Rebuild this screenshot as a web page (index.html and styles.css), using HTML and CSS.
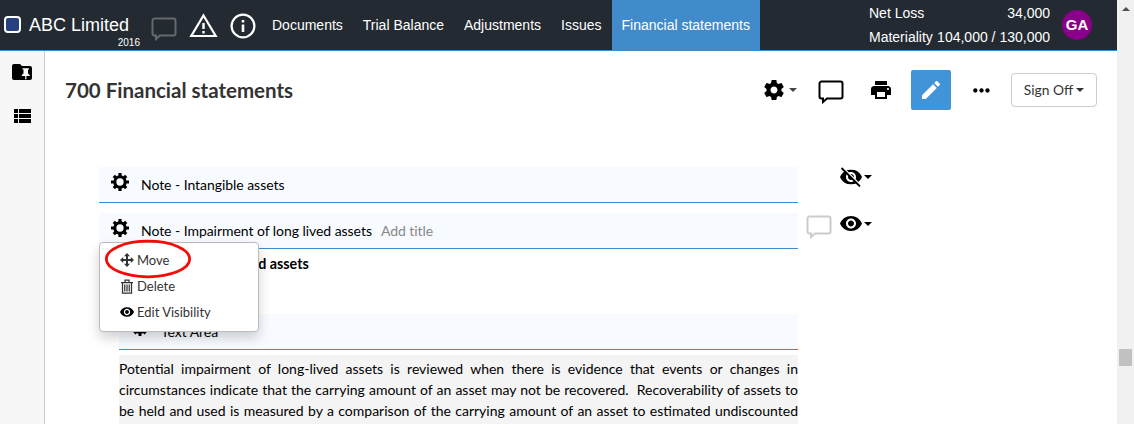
FILE: index.html
```html
<!DOCTYPE html>
<html lang="en">
<head>
<meta charset="utf-8">
<title>700 Financial statements</title>
<link rel="stylesheet" href="styles.css">
</head>
<body>
<svg class="defs" width="0" height="0" aria-hidden="true">
  <symbol id="gear" viewBox="0 0 18 18">
    <circle cx="9" cy="9" r="5.2" fill="none" stroke="#000" stroke-width="3.1"/>
    <g fill="#000">
      <path d="M7.400 0h3.200v4H7.400zM7.400 14h3.200v4H7.400zM0 7.400h4v3.200H0zM14 7.400h4v3.200h-4z"/>
      <path transform="rotate(45 9 9)" d="M7.400.2h3.200v4H7.400zM7.400 13.800h3.200v4H7.400zM.2 7.400h4v3.200h-4zM13.800 7.400h4v3.200h-4z"/>
    </g>
  </symbol>
  <symbol id="eye" viewBox="1 4.5 22 15">
    <path d="M12 4.5C7 4.5 2.73 7.61 1 12c1.73 4.39 6 7.5 11 7.5s9.27-3.11 11-7.5c-1.73-4.39-6-7.5-11-7.5zM12 17c-2.76 0-5-2.24-5-5s2.24-5 5-5 5 2.24 5 5-2.24 5-5 5zm0-8c-1.66 0-3 1.34-3 3s1.34 3 3 3 3-1.34 3-3-1.34-3-3-3z"/>
  </symbol>
  <symbol id="comment" viewBox="0 0 26 24">
    <path d="M4 1.5h18.500a2 2 0 0 1 2 2v13a2 2 0 0 1-2 2H9L5 22v-3.500H3.500a2 2 0 0 1-2-2v-13a2 2 0 0 1 2-2z" fill="none" stroke="currentColor" stroke-width="2"/>
  </symbol>
</svg>
<div class="window">
  <div class="app">
    <header class="topbar">
      <span class="logo"></span>
      <div class="client"><span class="client-name">ABC Limited</span><span class="client-year">2016</span></div>
      <svg class="top-comment" width="26" height="24"><use href="#comment"/></svg>
      <svg class="top-warning" width="29" height="25" viewBox="0 0 29 25"><path d="M14.500 2.500 26.700 23H2.300z" fill="none" stroke="#fff" stroke-width="2.200"/><path d="M13.300 10h2.400v6h-2.400zM13.300 18h2.400v2.400h-2.400z" fill="#fff"/></svg>
      <svg class="top-info" width="26" height="26" viewBox="0 0 26 26"><circle cx="13" cy="13" r="11.400" fill="none" stroke="#fff" stroke-width="2.200"/><path d="M11.700 7h2.600v2.600h-2.600zM11.700 11.500h2.600V19h-2.600z" fill="#fff"/></svg>
      <nav class="tabs">
        <a class="tab">Documents</a><a class="tab">Trial Balance</a><a class="tab">Adjustments</a><a class="tab">Issues</a><a class="tab active">Financial statements</a>
      </nav>
      <div class="totals">
        <div class="total"><span>Net Loss</span><span>34,000</span></div>
        <div class="total"><span>Materiality</span><span>104,000 / 130,000</span></div>
      </div>
      <span class="avatar">GA</span>
    </header>
    <div class="body">
      <aside class="sidebar">
        <svg class="folder" width="20" height="16" viewBox="0 0 20 16"><path d="M2 0h6l2 2h8a2 2 0 0 1 2 2v10a2 2 0 0 1-2 2H2a2 2 0 0 1-2-2V2a2 2 0 0 1 2-2z"/><path d="M10.500 4.300h6.500v1.200h-1v4l1.700 1.500v1.100h-3.300V15l-.6.600-.6-.6v-2.900H9.800V11l1.700-1.500v-4h-1z" fill="#fff"/></svg>
        <svg class="list" width="17" height="14" viewBox="0 0 17 14"><path d="M0 0h4v4H0zM5 0h12v4H5zM0 5h4v4H0zM5 5h12v4H5zM0 10h4v4H0zM5 10h12v4H5z"/></svg>
      </aside>
      <main class="main">
        <div class="heading">
          <h1>700 Financial statements</h1>
          <svg class="settings" width="20" height="20" viewBox="2 2 20 20"><path d="M19.430 12.980c.04-.32.07-.64.07-.98s-.03-.66-.07-.98l2.110-1.650c.19-.15.24-.42.12-.64l-2-3.460c-.12-.22-.39-.3-.61-.22l-2.490 1c-.52-.4-1.080-.73-1.690-.98l-.38-2.650C14.460 2.180 14.250 2 14 2h-4c-.25 0-.46.18-.49.42l-.38 2.650c-.61.25-1.170.59-1.690.98l-2.490-1c-.23-.09-.49 0-.61.22l-2 3.460c-.13.22-.07.49.12.64l2.110 1.650c-.04.32-.07.65-.07.98s.03.66.07.98l-2.110 1.650c-.19.15-.24.42-.12.64l2 3.460c.12.22.39.3.61.22l2.490-1c.52.4 1.080.73 1.690.98l.38 2.650c.03.24.24.42.49.42h4c.25 0 .46-.18.49-.42l.38-2.650c.61-.25 1.170-.59 1.690-.98l2.490 1c.23.09.49 0 .61-.22l2-3.460c.12-.22.07-.49-.12-.64l-2.110-1.650zM12 15.500c-1.930 0-3.500-1.570-3.500-3.500s1.570-3.500 3.500-3.500 3.500 1.570 3.500 3.500-1.570 3.500-3.500 3.500z"/></svg>
          <i class="caret soft"></i>
          <svg class="comment-tool" width="26" height="24"><use href="#comment"/></svg>
          <svg class="print" width="20" height="18" viewBox="2 3 20 18"><path d="M19 8H5c-1.660 0-3 1.340-3 3v6h4v4h12v-4h4v-6c0-1.660-1.340-3-3-3zm-3 11H8v-5h8v5zm3-7c-.55 0-1-.45-1-1s.45-1 1-1 1 .45 1 1-.45 1-1 1zm-1-9H6v4h12V3z"/></svg>
          <span class="edit"><svg width="18" height="18" viewBox="3 3 18 18"><path d="M3 17.250V21h3.750L17.810 9.940l-3.750-3.750L3 17.250zM20.710 7.040c.39-.39.39-1.020 0-1.410l-2.340-2.340c-.39-.39-1.020-.39-1.410 0l-1.830 1.830 3.750 3.750 1.830-1.830z" fill="#fff"/></svg></span>
          <svg class="more" width="17" height="5" viewBox="0 0 17 5"><circle cx="2.300" cy="2.500" r="2.150"/><circle cx="8.500" cy="2.500" r="2.150"/><circle cx="14.500" cy="2.500" r="2.150"/></svg>
          <button class="signoff">Sign Off<i class="caret"></i></button>
        </div>
        <div class="document">
          <div class="row">
            <div class="note"><svg width="18" height="18"><use href="#gear"/></svg><span>Note - Intangible assets</span></div>
            <div class="visibility">
              <svg class="hidden-eye" width="22" height="20" viewBox="1 2 22 20"><use href="#eye" x="1" y="4.500" width="22" height="15"/><path d="M3.500 2 22 20.500" stroke="#fff" stroke-width="1.500"/><path d="M2.500 3 21 21.500" stroke="#000" stroke-width="1.800"/></svg>
              <i class="caret"></i>
            </div>
          </div>
          <div class="row">
            <div class="note"><svg width="18" height="18"><use href="#gear"/></svg><span>Note - Impairment of long lived assets</span><span class="add">Add title</span></div>
            <svg class="row-comment" width="26" height="24"><use href="#comment"/></svg>
            <div class="visibility commented"><svg width="22" height="15"><use href="#eye"/></svg><i class="caret"></i></div>
            <div class="menu">
              <div class="item"><svg width="14" height="14" viewBox="0 0 14 14"><path fill="#333" d="M7 0l3 3.200H8v2.800h2.800V4L14 7l-3.200 3V8H8v2.800h2L7 14l-3-3.200h2V8H3.200v2L0 7l3.200-3v2H6V3.200H4z"/></svg><span>Move</span></div>
              <div class="item"><svg width="14" height="15" viewBox="0 0 14 15"><path d="M1 3.500h12M5 3V1h4v2M2.500 4v10h9V4M4.750 5.500v7M7 5.500v7M9.250 5.500v7" fill="none" stroke="#333" stroke-width="1.250"/></svg><span>Delete</span></div>
              <div class="item"><svg width="14" height="10"><use href="#eye"/></svg><span>Edit Visibility</span></div>
            </div>
            <svg class="ring" width="88" height="40" viewBox="0 0 88 40"><ellipse cx="44" cy="20" rx="41.700" ry="17.800" fill="none" stroke="#f50a0a" stroke-width="2.800"/></svg>
          </div>
          <h2>Impairment of long lived assets</h2>
          <section class="area">
            <div class="note"><svg width="16" height="16"><use href="#gear"/></svg><span>Text Area</span></div>
            <div class="text">
              <p>Potential impairment of long-lived assets is reviewed when there is evidence that events or changes in</p>
              <p>circumstances indicate that the carrying amount of an asset may not be recovered.&nbsp; Recoverability of assets to</p>
              <p>be held and used is measured by a comparison of the carrying amount of an asset to estimated undiscounted</p>
            </div>
          </section>
        </div>
      </main>
    </div>
  </div>
  <div class="scrollbar"><i class="up"></i><i class="thumb"></i></div>
</div>
</body>
</html>
```

FILE: styles.css
```css
* { box-sizing: border-box; }
body { margin: 0; overflow: hidden; background: #fff; font: 14px/20px Lato, sans-serif; color: #000; }
svg { display: block; flex: none; }
.defs { position: absolute; }
.window { display: flex; width: 1134px; height: 424px; overflow: hidden; }
.app { width: 1117px; display: flex; flex-direction: column; }
.topbar { display: flex; height: 51px; flex: none; background: #232a31; border-bottom: 1px solid #428bca; color: #fff; font-family: "Liberation Sans", Arial, sans-serif; }
.logo { width: 17px; height: 17px; margin: 16px 8px 0 4px; border: 2px solid #fff; border-radius: 4px; background: #27407f; flex: none; }
.client { width: 111px; display: flex; flex-direction: column; flex: none; }
.client-name { font-size: 18px; line-height: 20px; margin-top: 15px; white-space: nowrap; }
.client-year { font-size: 10px; line-height: 12px; margin-top: 2px; align-self: flex-end; }
.top-comment { margin: 17px 0 0 11px; color: #66696c; }
.top-warning { margin: 13px 0 0 12px; }
.top-info { margin: 13px 0 0 12px; }
.tabs { display: flex; margin-left: 6px; }
.tab { padding: 15px 10px 0; height: 50px; white-space: nowrap; }
.active { background: #428bca; }
.totals { margin-left: auto; width: 181px; padding-top: 3px; }
.total { display: flex; justify-content: space-between; height: 24px; white-space: nowrap; }
.avatar { width: 30px; height: 30px; margin: 10px 25px 0 12px; border-radius: 50%; background: #8b008b; text-align: center; font-size: 15px; font-weight: bold; line-height: 30px; flex: none; }
.body { display: flex; flex: 1; min-height: 0; }
.sidebar { width: 45px; border-right: 1px solid #ccc; background: #f7f7f7; display: flex; flex-direction: column; align-items: center; padding-top: 13px; }
.list { margin-top: 29px; }
.main { flex: 1; }
.heading { display: flex; align-items: center; height: 40px; margin: 19px 20px 0; }
.heading h1 { width: 699px; margin: 0; font-size: 20.5px; line-height: 24px; color: #333; flex: none; }
.caret { display: inline-block; border: 4px solid transparent; border-top-color: #000; border-bottom: 0; flex: none; }
.soft { border-top-color: #444; margin-left: 5px; }
.comment-tool { margin: 3px 0 0 21px; }
.print { margin-left: 27px; }
.edit { display: flex; align-items: center; justify-content: center; width: 40px; height: 40px; margin-left: 20px; border-radius: 2px; background: #4294d8; }
.more { margin-left: 22px; }
.signoff { display: flex; align-items: center; justify-content: center; width: 86px; height: 34px; margin-left: auto; padding: 0; gap: 3px; border: 1px solid #ccc; border-radius: 4px; background: #fff; color: #333; font: 13.8px/20px Lato, sans-serif; }
.signoff .caret { border-top-color: #333; }
.document { width: 699px; margin: 57px 0 0 54px; }
.row { display: flex; position: relative; height: 36px; margin-bottom: 10px; }
.note { display: flex; width: 699px; height: 36px; padding: 6px 0 0 12px; border-bottom: 1px solid #428bca; background: #f7fbff; flex: none; }
.note span { margin: 2px 0 0 12px; white-space: nowrap; letter-spacing: -.05px; font-variant-ligatures: normal; }
.note .add { margin-left: 9px; color: #888; }
.visibility { display: flex; align-items: center; height: 20px; gap: 2px; margin-left: 42px; }
.row-comment { margin: 2px 0 0 8px; color: #ccc; }
.commented { height: 21px; margin-left: 8px; }
.menu { position: absolute; z-index: 2; left: 0; top: 29px; width: 160px; height: 90px; padding: 4px 0 0 20px; background: #fff; border: 1px solid #bbb; border-radius: 4px; box-shadow: 0 6px 12px rgba(0,0,0,.18); color: #333; font-size: 13px; }
.item { display: flex; align-items: center; height: 26px; gap: 3px; }
.ring { position: absolute; z-index: 3; left: 5px; top: 26px; }
.document h2 { margin: -5px 0 0 13px; font-size: 14.300px; line-height: 20px; white-space: nowrap; }
.area { margin: 40px 0 0 20px; width: 679px; }
.area .note { width: 679px; padding-left: 13px; }
.area .note span { margin-left: 13px; }
.text { margin-top: 5px; padding-top: 3px; height: 80px; background: #f4f4f4; }
.text p { margin: 0; height: 21px; line-height: 21px; text-align-last: justify; white-space: nowrap; }
.scrollbar { width: 17px; background: #f1f1f1; display: flex; flex-direction: column; align-items: center; }
.up { border: 4px solid transparent; border-bottom-color: #505050; border-top: 0; margin-top: 7px; }
.thumb { width: 13px; height: 17px; margin-top: 338px; background: #c1c1c1; }
```
